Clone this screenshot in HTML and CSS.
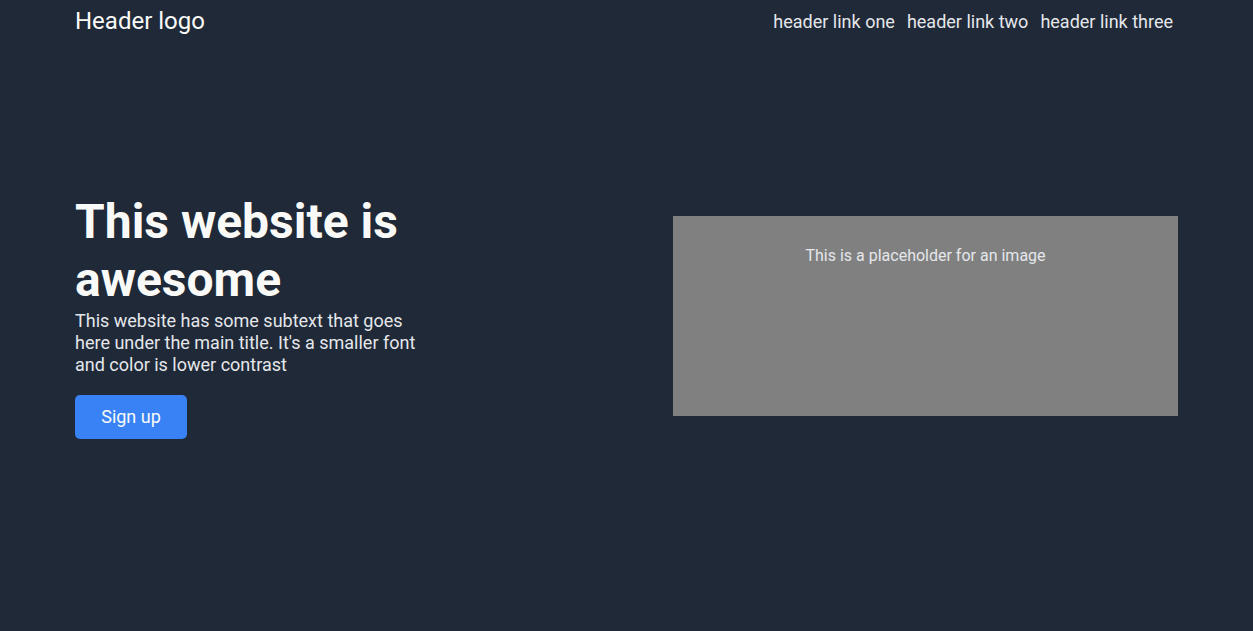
FILE: index.html
```html
<!DOCTYPE html>
<html lang="en">
<head>
<meta charset="utf-8">
<title>Landing</title>
<link rel="stylesheet" href="styles.css">
</head>
<body>
  <header class="header">
    <div class="logo">Header logo</div>
    <nav class="nav">
      <a href="#" class="nav-link">header link one</a>
      <a href="#" class="nav-link">header link two</a>
      <a href="#" class="nav-link">header link three</a>
    </nav>
  </header>
  <section class="hero">
    <div class="hero-text">
      <h1 class="hero-title">This website is awesome</h1>
      <p class="hero-sub">This website has some subtext that goes here under the main title. It's a smaller font and color is lower contrast</p>
      <button class="btn">Sign up</button>
    </div>
    <div class="hero-image">
      <p class="hero-image-text">This is a placeholder for an image</p>
    </div>
  </section>
</body>
</html>
```

FILE: styles.css
```css
html, body {
  margin: 0;
  padding: 0;
}
body {
  background: #1f2937;
  font-family: Roboto, "Liberation Sans", sans-serif;
  min-height: 631px;
}
.header {
  display: flex;
  justify-content: space-between;
  align-items: center;
  padding: 7px 80px 7px 75px;
}
.logo {
  font-size: 24px;
  color: #f9faf8;
}
.nav {
  display: flex;
  gap: 12px;
}
.nav-link {
  font-size: 18px;
  color: #e5e7eb;
  text-decoration: none;
}
.hero {
  display: flex;
  justify-content: space-between;
  align-items: center;
  padding: 151px 75px 0;
}
.hero-text {
  width: 350px;
}
.hero-title {
  margin: 0;
  font-size: 48px;
  line-height: 58.4px;
  font-weight: 700;
  color: #f9faf8;
}
.hero-sub {
  margin: 0;
  font-size: 18px;
  line-height: 22px;
  color: #e5e7eb;
}
.btn {
  margin-top: 19px;
  width: 112px;
  height: 44px;
  background: #3882f6;
  color: #f9faf8;
  border: none;
  border-radius: 5px;
  font-family: Roboto, "Liberation Sans", sans-serif;
  font-size: 18px;
  padding: 0;
}
.hero-image {
  width: 505px;
  height: 200px;
  background: #808080;
  box-sizing: border-box;
  padding-top: 30px;
}
.hero-image-text {
  margin: 0;
  text-align: center;
  font-size: 16px;
  color: #e5e7eb;
}
```
